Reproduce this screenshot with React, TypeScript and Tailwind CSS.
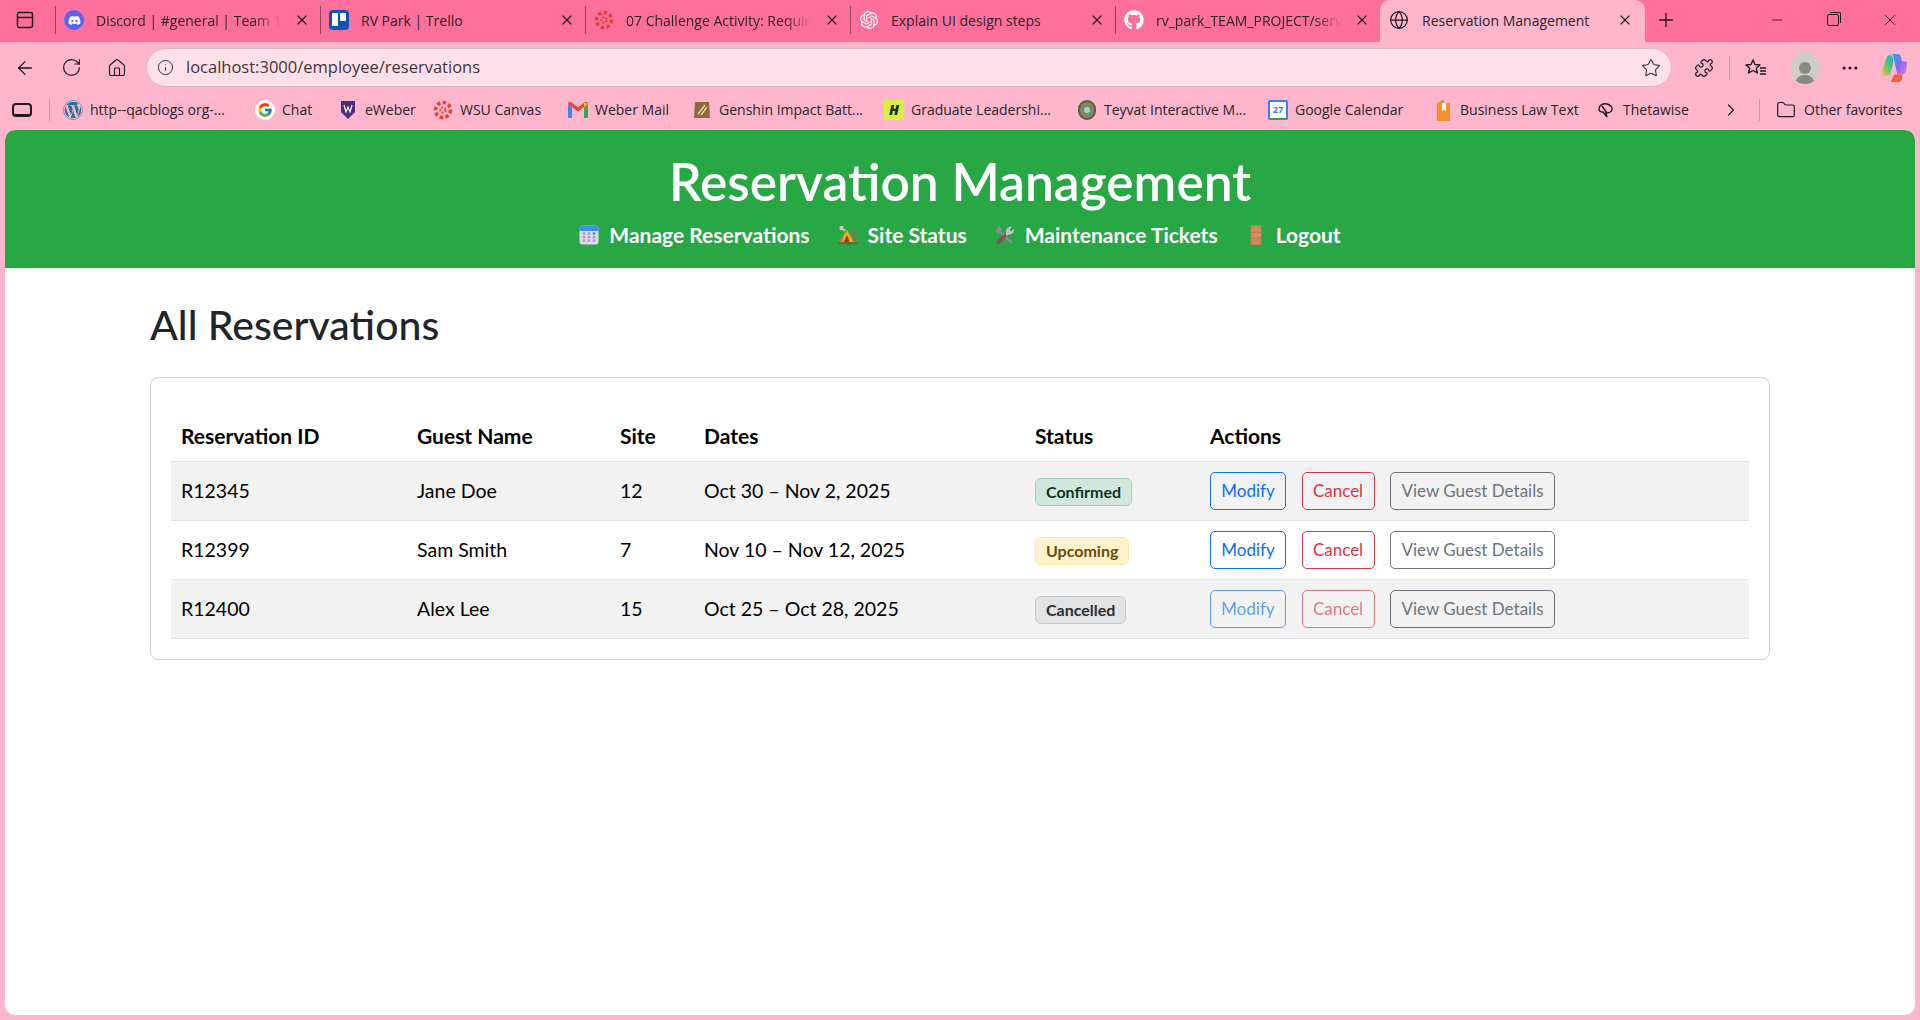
import { ArrowLeft, RotateCw, Home, Info, Star, X, Plus, Minus, Globe, ChevronRight, Folder, MoreHorizontal, Puzzle, PanelTop } from "lucide-react";
import { FaDiscord, FaGithub, FaWordpress } from "react-icons/fa";
import { FcGoogle } from "react-icons/fc";
import { SiOpenai } from "react-icons/si";
import type { ReactNode } from "react";

function CanvasIcon() {
  return (
    <svg viewBox="0 0 20 20" className="w-5 h-5 shrink-0">
      <circle cx="10" cy="10" r="2.6" fill="none" stroke="#e8402f" strokeWidth="2" strokeDasharray="2 1.4" />
      <circle cx="10" cy="10" r="7.5" fill="none" stroke="#e8402f" strokeWidth="3.6" strokeDasharray="3.4 2.4" />
    </svg>
  );
}

function Tab({ icon, title, fade }: { icon: ReactNode; title: string; fade?: boolean }) {
  return (
    <div className="w-[265px] h-[28px] shrink-0 flex items-center border-l border-[#8a4a63] pl-[8px] pr-[10px]">
      <div className="w-5 h-5 flex items-center justify-center shrink-0">{icon}</div>
      <div className={"ml-3 flex-1 min-w-0 overflow-hidden whitespace-nowrap text-[14px] text-[#2b2327] " + (fade ? "[mask-image:linear-gradient(90deg,#000_85%,transparent)]" : "")}>
        {title}
      </div>
      <X size={16} strokeWidth={1.6} className="ml-3 text-[#1f1a1c] shrink-0" />
    </div>
  );
}

function Bookmark({ icon, label, w }: { icon: ReactNode; label: string; w: string }) {
  return (
    <div className={"flex items-center shrink-0 " + w}>
      <div className="w-5 h-5 flex items-center justify-center shrink-0">{icon}</div>
      <span className="ml-[7px] whitespace-nowrap text-[14px] text-[#2b2327]">{label}</span>
    </div>
  );
}

function CalendarEmoji() {
  return (
    <svg viewBox="0 0 20 20" className="w-5 h-5 shrink-0">
      <rect x="0.5" y="0.5" width="19" height="19" rx="3" fill="#e0daf0" />
      <path d="M0.5 6V3.500a3 3 0 0 1 3-3h13a3 3 0 0 1 3 3V6z" fill="#3f8cf0" />
      {[8.5, 12, 15.5].map((y) =>
        [5, 10, 15].map((x) => (
          <rect key={x + "-" + y} x={x - 1.3} y={y - 1.2} width="2.6" height="2.4" fill={x === 15 && y === 8.5 ? "#3f8cf0" : "#a49db8"} />
        ))
      )}
    </svg>
  );
}

function TentEmoji() {
  return (
    <svg viewBox="0 0 20 20" className="w-5 h-5 shrink-0">
      <path d="M14.500 0l3 5-1 .5 3 6-1 .5 1.500 5h-8z" fill="#5e8a4a" />
      <circle cx="3.500" cy="3" r="2.200" fill="#c9c7c4" />
      <circle cx="6" cy="5" r="1.600" fill="#b6b3ae" />
      <path d="M1 17L9 5l7 12z" fill="#f2a71c" />
      <path d="M6 17l3.200-7 2.300 7z" fill="#8a3a1c" />
      <path d="M1 17l4-6 1 .5L3.500 17z" fill="#e2672a" />
      <rect x="0" y="17" width="20" height="2.500" rx="1" fill="#4c7a3c" />
    </svg>
  );
}

function ToolsEmoji() {
  return (
    <svg viewBox="0 0 20 20" className="w-5 h-5 shrink-0">
      <path d="M4 1l3.500 3.500-1.500 1.500L17.500 17 16 18.500 4.500 7.500 3 9 .5 5.500z" fill="#8f8a9a" />
      <path d="M12 9L3 17.500" stroke="#8a4a58" strokeWidth="3.400" strokeLinecap="round" />
      <path d="M11 6.500c0-3 2.500-5.500 6-5L14.500 4.500l1.500 2 3-2.500c.5 3-2 6-5 5.500L11 11z" fill="#c4c0cc" />
    </svg>
  );
}

function DoorEmoji() {
  return (
    <svg viewBox="0 0 20 20" className="w-5 h-5 shrink-0">
      <rect x="4.500" y="0" width="11" height="20" fill="#c47f55" />
      <rect x="6" y="2" width="8" height="4.500" fill="#d08d62" />
      <rect x="6" y="8" width="8" height="4.500" fill="#d08d62" />
      <rect x="6" y="14" width="8" height="4.500" fill="#d08d62" />
      <circle cx="14.500" cy="10" r="0.8" fill="#f0b040" />
    </svg>
  );
}

function NavLink({ icon, label }: { icon: ReactNode; label: string }) {
  return (
    <a className="flex items-center gap-[10px] text-[21px] font-bold text-white">
      {icon}
      {label}
    </a>
  );
}

function Badge({ label, cls }: { label: string; cls: string }) {
  return (
    <span className={"inline-block rounded-md border px-[10px] py-[4px] text-[16px] leading-[18px] font-bold " + cls}>
      {label}
    </span>
  );
}

function Btn({ label, cls }: { label: string; cls: string }) {
  return (
    <button className={"h-[38px] rounded-[5px] border bg-transparent text-[17px] whitespace-nowrap " + cls}>
      {label}
    </button>
  );
}

const rows = [
  { id: "R12345", guest: "Jane Doe", site: "12", dates: "Oct 30 – Nov 2, 2025", status: "Confirmed", badge: "bg-[#d1e7dd] border-[#a3cfbb] text-[#0a3622]", off: false },
  { id: "R12399", guest: "Sam Smith", site: "7", dates: "Nov 10 – Nov 12, 2025", status: "Upcoming", badge: "bg-[#fff3cd] border-[#ffe69c] text-[#664d03]", off: false },
  { id: "R12400", guest: "Alex Lee", site: "15", dates: "Oct 25 – Oct 28, 2025", status: "Cancelled", badge: "bg-[#e2e3e5] border-[#c4c8cb] text-[#2b2f32]", off: true },
];

export default function App() {
  return (
    <div className="w-[1920px] h-[1020px] overflow-hidden bg-[#ffb6cd] flex flex-col [font-family:'Open_Sans',sans-serif]">
      {/* tab strip */}
      <div className="h-[42px] bg-[#ff6f9c] flex items-center shrink-0 pb-[2px]">
        <div className="w-[55px] shrink-0 flex justify-center pr-[6px]">
          <PanelTop size={20} strokeWidth={1.8} className="text-[#1f1a1c]" />
        </div>
        <Tab icon={<div className="w-5 h-5 rounded-full bg-[#5865f2] flex items-center justify-center"><FaDiscord size={13} color="#fff" /></div>} title="Discord | #general | Team 1_C" fade />
        <Tab icon={<svg viewBox="0 0 20 20" className="w-5 h-5"><rect width="20" height="20" rx="4" fill="#0c55b5" /><rect x="3" y="3" width="6" height="13" rx="1" fill="#fff" /><rect x="11" y="3" width="6" height="8" rx="1" fill="#fff" /></svg>} title="RV Park | Trello" />
        <Tab icon={<CanvasIcon />} title="07 Challenge Activity: Require" fade />
        <Tab icon={<SiOpenai size={18} color="#fff" />} title="Explain UI design steps" />
        <Tab icon={<FaGithub size={20} color="#fff" />} title="rv_park_TEAM_PROJECT/serve" fade />
        <div className="w-[265px] h-[42px] shrink-0 self-end -mb-[2px] bg-[#ffb6cd] rounded-t-[10px] flex items-center pl-[9px] pr-[12px] pb-[2px]">
          <Globe size={20} strokeWidth={1.5} className="text-[#1f1a1c] shrink-0" />
          <div className="ml-[13px] flex-1 text-[14px] text-[#2b2327] whitespace-nowrap">Reservation Management</div>
          <X size={16} strokeWidth={1.6} className="text-[#1f1a1c]" />
        </div>
        <Plus size={22} strokeWidth={1.4} className="ml-[10px] text-[#1f1a1c]" />
        <div className="ml-auto flex items-center gap-[42px] pr-[21px]">
          <Minus size={16} strokeWidth={1.2} className="text-[#1f1a1c]" />
          <div className="relative w-[12px] h-[12px] border border-[#1f1a1c] rounded-[2px] after:content-[''] after:absolute after:-top-[3px] after:-right-[3px] after:w-[11px] after:h-[11px] after:border-t after:border-r after:border-[#1f1a1c] after:rounded-tr-[2px]" />
          <X size={18} strokeWidth={1.1} className="text-[#1f1a1c]" />
        </div>
      </div>

      {/* toolbar */}
      <div className="h-[45px] shrink-0 flex items-center pt-[6px]">
        <div className="w-[146px] shrink-0 flex items-center pl-[14px] gap-[25px] text-[#1f1a1c]">
          <ArrowLeft size={22} strokeWidth={1.4} />
          <RotateCw size={21} strokeWidth={1.4} />
          <Home size={20} strokeWidth={1.4} />
        </div>
        <div className="w-[1526px] h-[39px] rounded-full bg-[#ffe0ea] border border-[#d9b4c1] flex items-center pl-[10px] pr-[10px]">
          <Info size={17} strokeWidth={1.4} className="text-[#3a3034]" />
          <span className="ml-[12px] text-[16.500px] text-[#3f3439]">localhost:3000/employee/reservations</span>
          <Star size={20} strokeWidth={1.3} className="ml-auto text-[#3a3034]" />
        </div>
        <div className="flex items-center text-[#1f1a1c]">
          <Puzzle size={20} strokeWidth={1.5} className="ml-[22px]" />
          <div className="ml-[15px] w-px h-[24px] bg-[#d394aa]" />
          <svg viewBox="0 0 22 20" fill="none" stroke="currentColor" strokeWidth="1.400" className="ml-[15px] w-[22px] h-[20px]">
            <path d="M8 2l2 4.500 5 .5-3.700 3.300L12.500 15 8 12.500 3.500 15l1.200-4.700L1 7l5-.5z" strokeLinejoin="round" />
            <path d="M15 10h6M15 13h6M15 16h6" />
          </svg>
          <div className="ml-[24px] w-[28px] h-[32px] rounded-full bg-[#cfcdc7] flex flex-col items-center justify-end overflow-hidden">
            <div className="w-[12px] h-[12px] rounded-full bg-[#8a8883]" />
            <div className="mt-[1px] w-[20px] h-[9px] rounded-t-full bg-[#8a8883]" />
          </div>
          <MoreHorizontal size={20} strokeWidth={1.8} className="ml-[21px]" />
          <svg viewBox="0 0 24 28" className="ml-[21px] w-[26px] h-[30px]">
            <defs>
              <linearGradient id="cp" x1="0" y1="0" x2="1" y2="1">
                <stop offset="0" stopColor="#1fb6e8" />
                <stop offset="0.5" stopColor="#7c6cf0" />
                <stop offset="1" stopColor="#e070e0" />
              </linearGradient>
              <linearGradient id="cp2" x1="0" y1="1" x2="1" y2="0">
                <stop offset="0" stopColor="#f6c544" />
                <stop offset="0.6" stopColor="#3fc47a" />
                <stop offset="1" stopColor="#2aa7e0" />
              </linearGradient>
            </defs>
            <path d="M9 1h6c2 0 3 1 3.500 3l1 4H23c1 0 1 1 1 2l-1 7c-.5 2-2 3-4 3h-4L12 6C11.500 3 11 1 9 1z" fill="url(#cp)" />
            <path d="M8 2C6 2 5 4 4.500 6L1 16c-1 3 .5 5 3 5h4l3-10c.5-2 1-9-3-9z" fill="url(#cp2)" />
            <path d="M9 27h7c2 0 3-1 3.500-3l.5-4H12z" fill="#f2603c" />
          </svg>
        </div>
      </div>

      {/* favorites bar */}
      <div className="h-[43px] shrink-0 flex items-center pt-[2px]">
        <div className="w-[49px] shrink-0 pl-[12px]">
          <div className="w-5 h-[14px] rounded-[4px] border-2 border-[#1f1a1c] border-b-[3px]" />
        </div>
        <div className="w-px h-[22px] bg-[#d394aa] mr-[13px]" />
        <Bookmark w="w-[192px]" icon={<FaWordpress size={20} color="#21759b" />} label="http--qacblogs org-..." />
        <Bookmark w="w-[83px]" icon={<div className="w-5 h-5 rounded-full bg-white flex items-center justify-center"><FcGoogle size={16} /></div>} label="Chat" />
        <Bookmark w="w-[95px]" icon={<svg viewBox="0 0 14 18" className="w-[14px] h-[18px]"><path d="M0 0h14v11l-7 7-7-7z" fill="#4b2a80" /><path d="M3 4l2 7 2-5 2 5 2-7" fill="none" stroke="#fff" strokeWidth="1.200" /></svg>} label="eWeber" />
        <Bookmark w="w-[135px]" icon={<CanvasIcon />} label="WSU Canvas" />
        <Bookmark w="w-[124px]" icon={<svg viewBox="0 0 20 16" className="w-5 h-4"><path d="M0 2l4 3v11H1.500A1.500 1.500 0 0 1 0 14.500z" fill="#4285f4" /><path d="M16 5l4-3v12.500a1.500 1.500 0 0 1-1.500 1.500H16z" fill="#34a853" /><path d="M0 2c0-2 2-2.500 3.500-1.500L10 5.500l6.500-5C18 -.5 20 0 20 2l-4 3-6 4.500L4 5z" fill="#ea4335" /><path d="M16 .5L20 2l-4 3z" fill="#fbbc04" /></svg>} label="Weber Mail" />
        <Bookmark w="w-[192px]" icon={<svg viewBox="0 0 18 18" className="w-[18px] h-[18px]"><path d="M2 1h14l1 16H1z" fill="#8a6a3c" /><path d="M5 13l7-9M8 14l6-8" stroke="#e8d3a0" strokeWidth="1.500" /></svg>} label="Genshin Impact Batt..." />
        <Bookmark w="w-[193px]" icon={<div className="w-5 h-5 bg-[#d8f23c] flex items-center justify-center text-[14px] font-extrabold italic text-[#14301f]">H</div>} label="Graduate Leadershi..." />
        <Bookmark w="w-[191px]" icon={<div className="w-[18px] h-5 rounded-full bg-[#7f8760] border-2 border-[#5c5a3f] flex items-center justify-center"><div className="w-[6px] h-[6px] rounded-full bg-[#9fd3d8]" /></div>} label="Teyvat Interactive M..." />
        <Bookmark w="w-[165px]" icon={<div className="w-5 h-5 rounded-[2px] bg-white border-2 border-[#3b7ded] border-b-[#2e9e4f] flex items-center justify-center text-[9px] font-bold text-[#3b7ded]">27</div>} label="Google Calendar" />
        <Bookmark w="w-[163px]" icon={<svg viewBox="0 0 13 22" className="w-[13px] h-[22px]"><path d="M0 4l7-4v4h6v18H0z" fill="#f78f2a" /><path d="M5 4h4v8l-2-1.500L5 12z" fill="#fff" /></svg>} label="Business Law Text" />
        <Bookmark w="w-[125px]" icon={<svg viewBox="0 0 20 20" className="w-5 h-5"><path d="M3 9c0-4 4-6 8-5s6 4 5 6-4 3-6 3l1 4-4-5c-2 0-4-1-4-3zM6 6l5 7" fill="none" stroke="#1f1a1c" strokeWidth="1.400" /></svg>} label="Thetawise" />
        <ChevronRight size={20} strokeWidth={1.4} className="text-[#1f1a1c] shrink-0" />
        <div className="ml-[18px] w-px h-[22px] bg-[#d394aa] shrink-0" />
        <Folder size={20} strokeWidth={1.4} className="ml-[16px] text-[#1f1a1c] shrink-0" />
        <span className="ml-[8px] text-[14px] text-[#2b2327] whitespace-nowrap">Other favorites</span>
      </div>

      {/* page */}
      <div className="mx-[5px] h-[885px] shrink-0 bg-white rounded-[10px] overflow-hidden [font-family:Lato,sans-serif]">
        <header className="h-[138px] bg-[#28a745] flex flex-col items-center pt-[22px]">
          <h1 className="text-[51.500px] leading-[58px] font-semibold text-white">Reservation Management</h1>
          <nav className="mt-[9px] flex items-center gap-[28px]">
            <NavLink icon={<CalendarEmoji />} label="Manage Reservations" />
            <NavLink icon={<TentEmoji />} label="Site Status" />
            <NavLink icon={<ToolsEmoji />} label="Maintenance Tickets" />
            <NavLink icon={<DoorEmoji />} label="Logout" />
          </nav>
        </header>

        <main className="w-[1620px] mx-auto pt-[33px]">
          <h2 className="text-[41px] leading-[48px] font-medium text-[#212529]">All Reservations</h2>
          <div className="mt-[28px] h-[283px] border border-[#ced4da] rounded-[8px] px-[20px] pt-[40px]">
            <table className="w-full border-collapse text-[19.500px] text-black">
              <thead>
                <tr className="h-[43px] text-left border-b border-[#dee2e6] text-[21px]">
                  <th className="w-[236px] pl-[10px] pb-[7px] font-bold">Reservation ID</th>
                  <th className="w-[203px] pl-[10px] pb-[7px] font-bold">Guest Name</th>
                  <th className="w-[84px] pl-[10px] pb-[7px] font-bold">Site</th>
                  <th className="w-[331px] pl-[10px] pb-[7px] font-bold">Dates</th>
                  <th className="w-[175px] pl-[10px] pb-[7px] font-bold">Status</th>
                  <th className="pl-[10px] pb-[7px] font-bold">Actions</th>
                </tr>
              </thead>
              <tbody>
                {rows.map((r, i) => (
                  <tr key={r.id} className={"h-[59px] border-b border-[#dee2e6] " + (i % 2 === 0 ? "bg-[#f2f2f2]" : "bg-white")}>
                    <td className="pl-[10px]">{r.id}</td>
                    <td className="pl-[10px]">{r.guest}</td>
                    <td className="pl-[10px]">{r.site}</td>
                    <td className="pl-[10px]">{r.dates}</td>
                    <td className="pl-[10px]">
                      <Badge label={r.status} cls={r.badge} />
                    </td>
                    <td className="pl-[10px]">
                      <div className="flex items-center gap-[15.500px]">
                        <Btn label="Modify" cls={"w-[76px] border-[#0d6efd] text-[#0d6efd] " + (r.off ? "opacity-65" : "")} />
                        <Btn label="Cancel" cls={"w-[73px] border-[#dc3545] text-[#dc3545] " + (r.off ? "opacity-65" : "")} />
                        <Btn label="View Guest Details" cls="w-[165px] border-[#6c757d] text-[#6c757d]" />
                      </div>
                    </td>
                  </tr>
                ))}
              </tbody>
            </table>
          </div>
        </main>
      </div>
    </div>
  );
}
